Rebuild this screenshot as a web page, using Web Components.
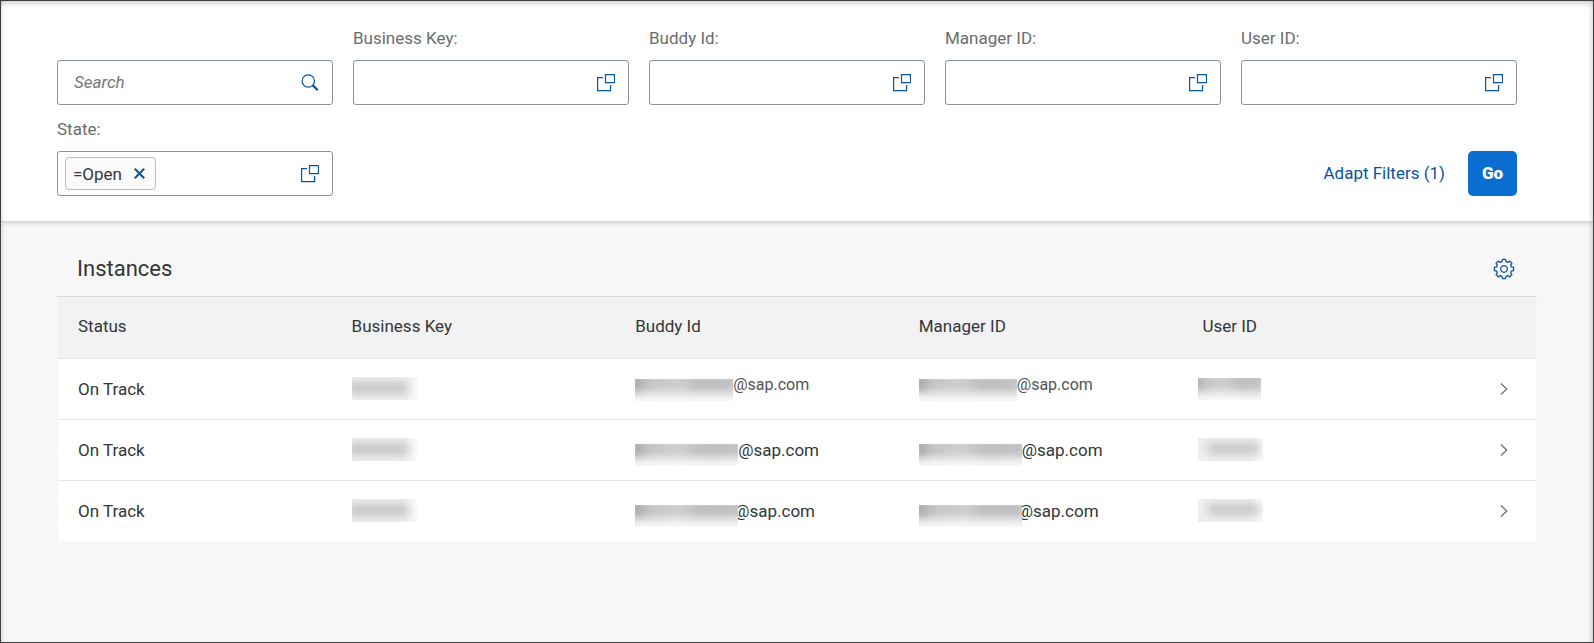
<!DOCTYPE html>
<html lang="en">
<head>
<meta charset="utf-8">
<title>Instances</title>
<style>
  body { margin: 0; font-family: Roboto, "Liberation Sans", sans-serif; font-size: 17px; color: #32363a; }
</style>
</head>
<body>
<app-frame>
  <filter-bar>
    <filter-field kind="search" placeholder="Search"></filter-field>
    <filter-field label="Business Key:"></filter-field>
    <filter-field label="Buddy Id:"></filter-field>
    <filter-field label="Manager ID:"></filter-field>
    <filter-field label="User ID:"></filter-field>
    <filter-field label="State:" token="=Open"></filter-field>
    <filter-actions></filter-actions>
  </filter-bar>
  <instance-list heading="Instances"></instance-list>
</app-frame>

<script>
const define = (name, html, setup) => {
  const template = document.createElement('template');
  template.innerHTML = html;
  customElements.define(name, class extends HTMLElement {
    connectedCallback() {
      if (this.shadowRoot) return;
      const root = this.attachShadow({ mode: 'open' });
      root.append(template.content.cloneNode(true));
      if (setup) setup(this, root);
    }
  });
};

define('app-frame', `
<style>
  :host { display: block; position: relative; box-sizing: border-box; min-height: 100vh; border: 1px solid #434142; background: #f7f7f7; }
  :host::after { content: ""; position: absolute; inset: 0; pointer-events: none; box-shadow: inset 0 5px 5px -2px rgba(60,50,55,.2), inset 4px 0 4px -2px rgba(60,50,55,.09), inset -4px 0 4px -2px rgba(60,50,55,.14); }
</style>
<slot></slot>`);

define('filter-bar', `
<style>
  :host { display: grid; grid-template-columns: repeat(5, 1fr); gap: 12px 20px; padding: 25px 76px 25px 56px; background: #fff; border-bottom: 1px solid #d9d9d9; box-shadow: 0 1px 5px rgba(0,0,0,.17); }
</style>
<slot></slot>`);

const icons = {
  search: `<svg width="18" height="18" viewBox="0 0 18 18" fill="none" stroke="#0854a0"><circle cx="7.3" cy="7" r="6.2" stroke-width="1.2"/><path d="M11.8 11.4l5 4.8" stroke-width="2.2"/></svg>`,
  valueHelp: `<svg width="18" height="18" viewBox="0 0 18 18" fill="none" stroke="#0854a0" stroke-width="1.2"><path d="M8.5.7h9v8h-9zM6 3.6H.6v13h13V11"/></svg>`
};

define('filter-field', `
<style>
  :host { display: block; min-width: 0; }
  label { display: block; height: 24px; line-height: 24px; margin-bottom: 10px; color: #6a6d70; white-space: nowrap; }
  .box { display: flex; align-items: center; box-sizing: border-box; height: 45px; padding: 0 13px 0 7px; border: 1px solid #89919a; border-radius: 3px; background: #fff; }
  input { flex: 1; min-width: 0; height: 32px; margin: 0; padding: 0 9px 2px; border: 0; outline: 0; background: none; font: inherit; color: #32363a; }
  input::placeholder { color: #74777a; font-style: italic; opacity: 1; }
  button { display: flex; padding: 0; border: 0; background: none; cursor: pointer; }
  .token { display: flex; align-items: center; gap: 12px; box-sizing: border-box; height: 33px; padding: 0 10px 0 7px; border: 1px solid #bcbcbc; border-radius: 4px; background: #fafafa; white-space: nowrap; }
</style>
<label for="value"></label>
<div class="box"><input id="value" type="text"><button type="button"></button></div>`, (host, root) => {
  const label = host.getAttribute('label');
  const input = root.querySelector('input');
  const button = root.querySelector('button');
  const search = host.getAttribute('kind') === 'search';
  root.querySelector('label').textContent = label || '';
  if (!label) input.setAttribute('aria-label', 'Search');
  input.placeholder = host.getAttribute('placeholder') || '';
  button.innerHTML = search ? icons.search : icons.valueHelp;
  button.setAttribute('aria-label', search ? 'Search' : 'Open value help');
  const token = host.getAttribute('token');
  if (token) {
    const chip = document.createElement('div');
    chip.className = 'token';
    chip.innerHTML = `<span></span><button type="button" aria-label="Remove"><svg width="11" height="11" viewBox="0 0 11 11" stroke="#0854a0" stroke-width="2"><path d="M.8.8l9.4 9.4M10.2.8L.8 10.2"/></svg></button>`;
    chip.querySelector('span').textContent = token;
    root.querySelector('.box').prepend(chip);
  }
});

define('filter-actions', `
<style>
  :host { grid-column: 2 / -1; display: flex; align-items: flex-end; justify-content: flex-end; gap: 12px; }
  button { box-sizing: border-box; height: 45px; padding: 0 11px 2px; border: 0; border-radius: 5px; background: none; color: #0854a0; font: inherit; cursor: pointer; white-space: nowrap; }
  .go { min-width: 49px; background: #0a6ed1; color: #fff; font-weight: 900; }
</style>
<button type="button">Adapt Filters (1)</button>
<button type="button" class="go">Go</button>`);

/* A masked value: a soft grey smudge clipped to a box. */
define('masked-value', `
<style>
  :host { display: block; flex: none; position: relative; overflow: hidden; width: 65px; height: 23px; background: linear-gradient(90deg, #f0f0f0 80%, #fafafa); }
  i { position: absolute; inset: 5px 9px 6px -4px; background: #c2c4c5; filter: blur(5px); }
  :host([kind=name]) { width: 98px; height: 22px; margin-bottom: -4px; background: #fafafa; }
  :host([kind=name]) i { inset: -6px -6px 8px -6px; background: linear-gradient(90deg, #a2a3a5 5%, #c2c3c5 16%, #cdcecf 45%, #bcbdbf 62%, #c1c2c4); }
  :host([kind=user]) { margin-left: -4px; }
  :host([kind=user]) i { inset: 5px 4px 7px 10px; }
  :host([kind=name][short]) { width: 63px; margin: 0 0 -8px -4px; }
  :host([wide]) { width: 103px; }
  :host([over]) { margin-right: -4px; }
</style>
<i></i>`);

define('instance-list', `
<style>
  :host { display: block; padding: 0 56px 40px; }
  header { display: flex; align-items: center; justify-content: space-between; height: 75px; padding: 20px 22px 0 20px; box-sizing: border-box; border-bottom: 1px solid #d9d9d9; }
  h2 { margin: 0; font-size: 22px; line-height: 28px; font-weight: 400; }
  button { display: flex; padding: 0; border: 0; background: none; cursor: pointer; }
  .table { padding: 0 1px; }
  table { width: 100%; border-collapse: collapse; table-layout: fixed; background: #fff; }
  col.nav { width: 60px; }
  th, td { box-sizing: border-box; height: 61px; padding: 0 10px; text-align: left; font-weight: 400; line-height: 24px; white-space: nowrap; border-bottom: 1px solid #e5e5e5; }
  th { background: #f2f2f2; padding-bottom: 2px; }
  th:first-child, td:first-child { padding-left: 20px; }
  tbody tr:last-child td { border-bottom: 0; }
  .mail { display: flex; align-items: flex-end; }
  .raised { padding-bottom: 8px; font-size: 16px; color: #515457; }
  td.nav-cell { padding-left: 22px; }
</style>
<header>
  <h2></h2>
  <button type="button" aria-label="Settings"><svg width="22" height="22" viewBox="-11 -11 22 22" fill="none" stroke="#0854a0" stroke-width="1.3"><path class="gear" stroke-linejoin="round"/><circle r="3.3"/></svg></button>
</header>
<div class="table">
<table>
  <colgroup><col><col><col><col><col><col class="nav"></colgroup>
  <thead><tr><th>Status</th><th>Business Key</th><th>Buddy Id</th><th>Manager ID</th><th>User ID</th><th></th></tr></thead>
  <tbody></tbody>
</table>
</div>`, (host, root) => {
  root.querySelector('h2').textContent = host.getAttribute('heading');
  let d = '';
  for (let n = 0; n < 8; n++) {
    [[-16, 7.6], [-9, 9.7], [9, 9.7], [16, 7.6]].forEach(([offset, r]) => {
      const a = (n * 45 + offset) * Math.PI / 180;
      d += (d ? 'L' : 'M') + (r * Math.cos(a)).toFixed(2) + ' ' + (r * Math.sin(a)).toFixed(2);
    });
  }
  root.querySelector('.gear').setAttribute('d', d + 'Z');
  const mail = row => `<div class="mail${row === 0 ? ' raised' : ''}"><masked-value kind="name"${['', ' wide', ' wide over'][row]}></masked-value><span>@sap.com</span></div>`;
  const user = row => row === 0
    ? '<div class="mail raised"><masked-value kind="name" short></masked-value></div>'
    : '<masked-value kind="user"></masked-value>';
  root.querySelector('tbody').innerHTML = [0, 1, 2].map(row => `<tr>
    <td>On Track</td><td><masked-value></masked-value></td><td>${mail(row)}</td><td>${mail(row)}</td>
    <td>${user(row)}</td>
    <td class="nav-cell"><button type="button" aria-label="Details"><svg width="12" height="14" viewBox="0 0 12 14" fill="none" stroke="#6a6d70" stroke-width="1.2"><path d="M3 1.5L8.7 7 3 12.5"/></svg></button></td></tr>`).join('');
});
</script>
</body>
</html>
